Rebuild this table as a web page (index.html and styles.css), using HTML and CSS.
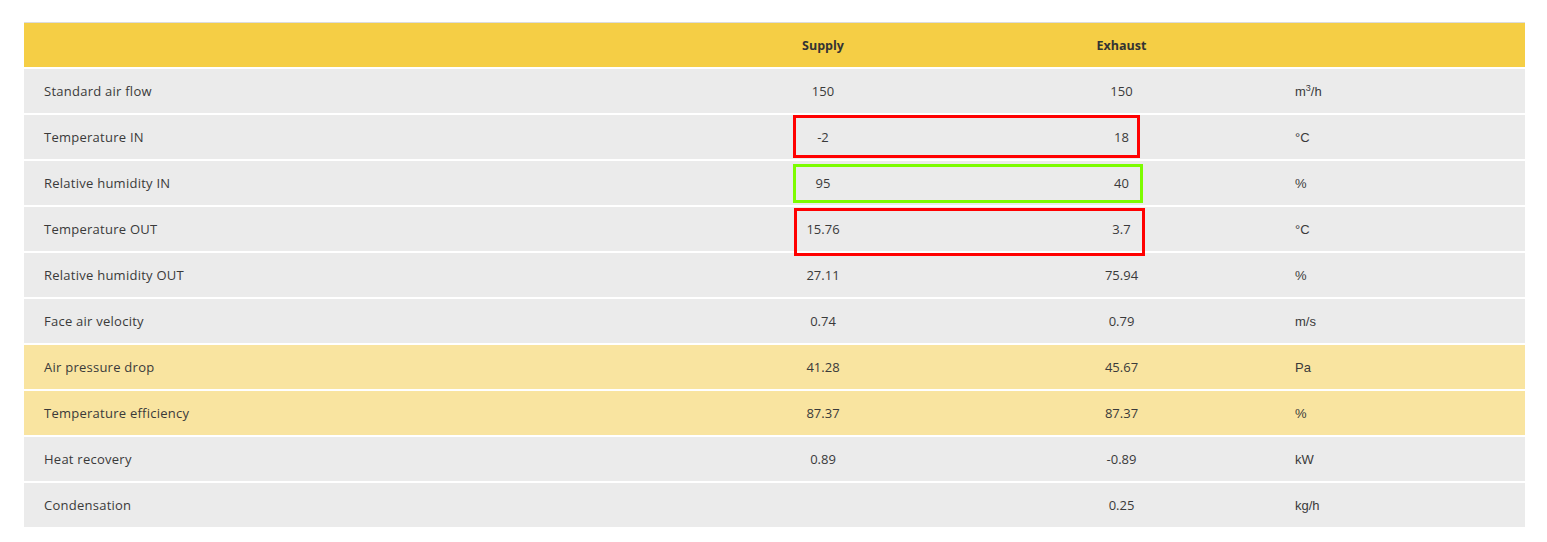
FILE: index.html
```html
<!DOCTYPE html>
<html>
<head>
<meta charset="utf-8">
<link rel="stylesheet" href="styles.css">
</head>
<body>
<div class="wrap">
  <table class="spec">
    <colgroup>
      <col class="c-label"><col class="c-val"><col class="c-val2"><col class="c-unit">
    </colgroup>
    <thead>
      <tr><th></th><th>Supply</th><th>Exhaust</th><th></th></tr>
    </thead>
    <tbody>
      <tr><td class="lbl">Standard air flow</td><td class="v">150</td><td class="v">150</td><td class="u">m<sup>3</sup>/h</td></tr>
      <tr><td class="lbl">Temperature IN</td><td class="v">-2</td><td class="v">18</td><td class="u">°C</td></tr>
      <tr><td class="lbl">Relative humidity IN</td><td class="v">95</td><td class="v">40</td><td class="u">%</td></tr>
      <tr><td class="lbl">Temperature OUT</td><td class="v">15.76</td><td class="v">3.7</td><td class="u">°C</td></tr>
      <tr><td class="lbl">Relative humidity OUT</td><td class="v">27.11</td><td class="v">75.94</td><td class="u">%</td></tr>
      <tr><td class="lbl">Face air velocity</td><td class="v">0.74</td><td class="v">0.79</td><td class="u">m/s</td></tr>
      <tr class="hl"><td class="lbl">Air pressure drop</td><td class="v">41.28</td><td class="v">45.67</td><td class="u">Pa</td></tr>
      <tr class="hl"><td class="lbl">Temperature efficiency</td><td class="v">87.37</td><td class="v">87.37</td><td class="u">%</td></tr>
      <tr><td class="lbl">Heat recovery</td><td class="v">0.89</td><td class="v">-0.89</td><td class="u">kW</td></tr>
      <tr><td class="lbl">Condensation</td><td class="v"></td><td class="v">0.25</td><td class="u">kg/h</td></tr>
    </tbody>
  </table>
  <div class="mark red m1"></div>
  <div class="mark green m2"></div>
  <div class="mark red m3"></div>
</div>
</body>
</html>
```
FILE: styles.css
```css
html, body {
  margin: 0;
  padding: 0;
  background: #ffffff;
}
body {
  font-family: "Open Sans", "Liberation Sans", sans-serif;
  color: #3a3a3a;
}
.wrap {
  position: relative;
  padding: 22px 22px 0 24px;
  width: 1501px;
}
.spec {
  width: 1501px;
  border-collapse: collapse;
  table-layout: fixed;
  border-top: 1px solid #dcdcdc;
}
.c-label { width: 649px; }
.c-val { width: 300px; }
.c-val2 { width: 297px; }
.c-unit { width: 255px; }
.spec th {
  background: #f5ce45;
  height: 44px;
  padding: 0;
  font-size: 12.5px;
  font-weight: 700;
  text-align: center;
  color: #333;
}
.spec td {
  height: 44px;
  padding: 0;
  background: #ebebeb;
  border-top: 2px solid #ffffff;
  font-size: 13px;
  vertical-align: middle;
}
.spec tr.hl td {
  background: #f9e4a0;
}
.spec td.lbl {
  padding-left: 20px;
  letter-spacing: 0.25px;
}
.spec td.v {
  text-align: center;
}
.spec td.u {
  padding-left: 25px;
  font-family: "Liberation Sans", Arial, sans-serif;
}
.spec sup {
  font-size: 9px;
  line-height: 0;
  vertical-align: 5px;
}
.mark {
  position: absolute;
  box-sizing: border-box;
  border: 3px solid #ff0000;
}
.mark.green { border-color: #7cfc00; }
.m1 { left: 793px; top: 115px; width: 347px; height: 43px; }
.m2 { left: 793px; top: 164px; width: 350px; height: 39px; }
.m3 { left: 794px; top: 208px; width: 351px; height: 48px; }
```
